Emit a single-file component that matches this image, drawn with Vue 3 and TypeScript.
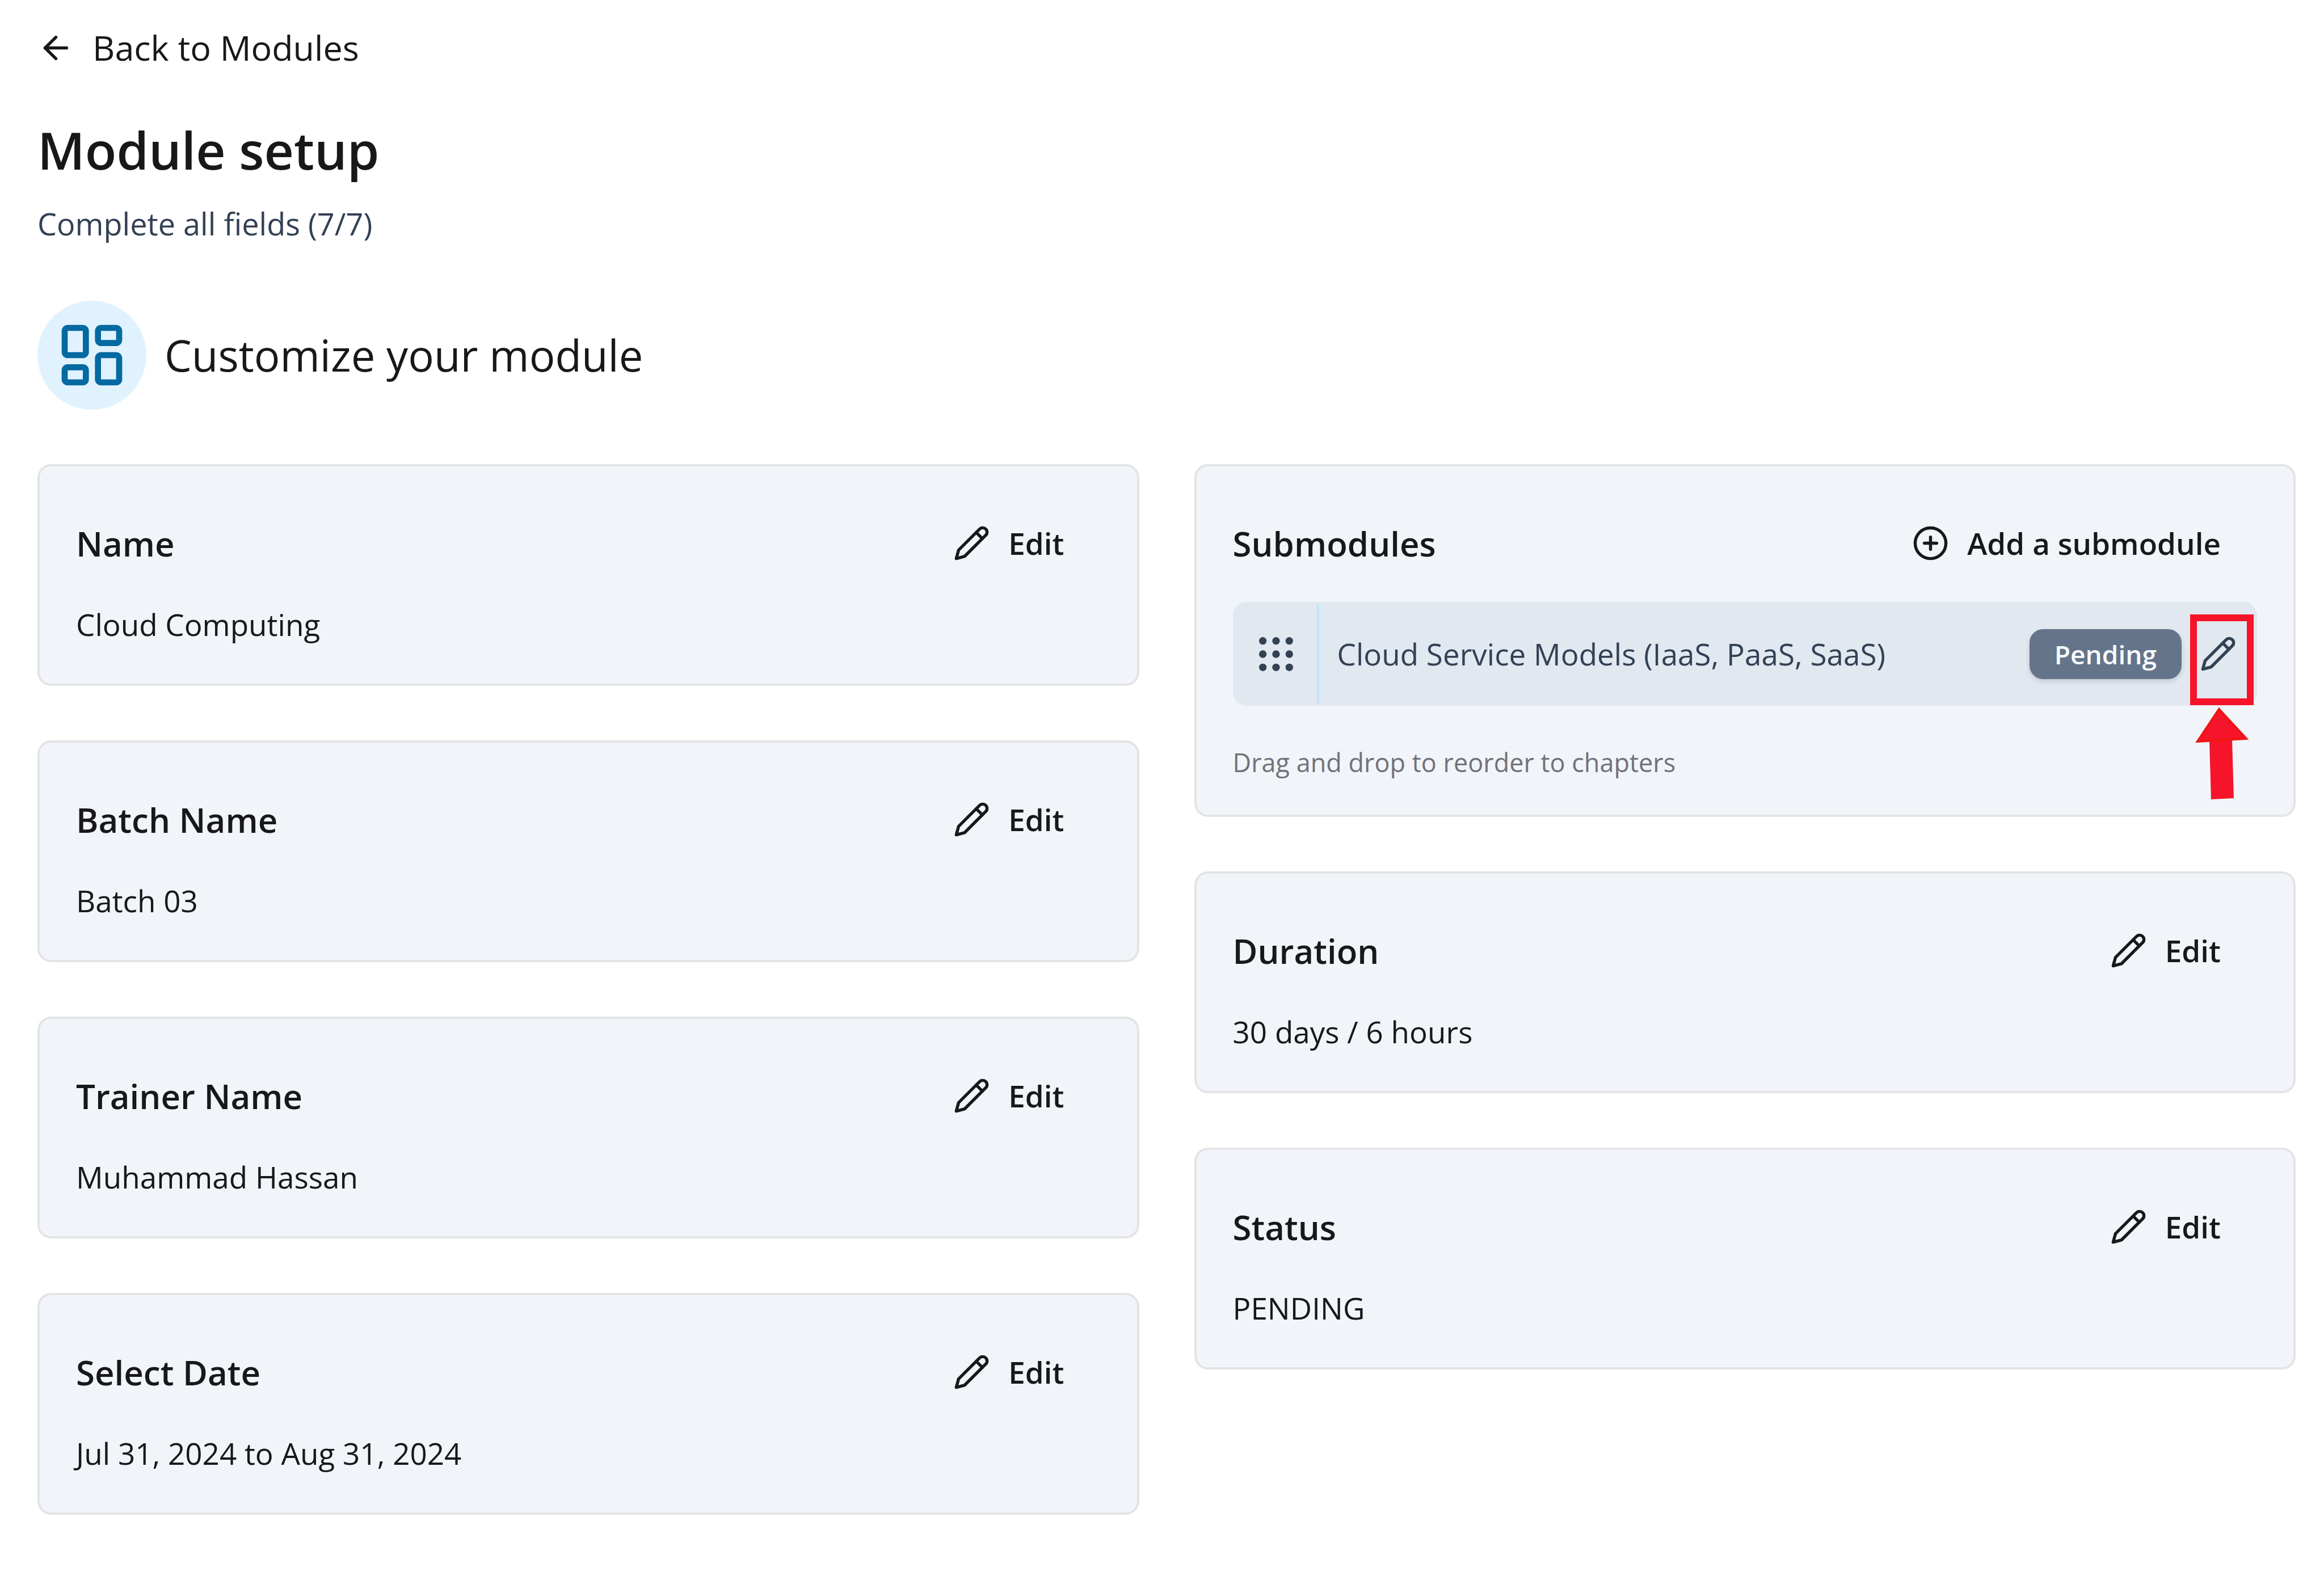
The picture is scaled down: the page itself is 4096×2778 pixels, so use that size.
<script setup lang="ts">
interface Field {
  label: string
  value: string
}

const leftFields: Field[] = [
  { label: 'Name', value: 'Cloud Computing' },
  { label: 'Batch Name', value: 'Batch 03' },
  { label: 'Trainer Name', value: 'Muhammad Hassan' },
  { label: 'Select Date', value: 'Jul 31, 2024 to Aug 31, 2024' },
]

const rightFields: Field[] = [
  { label: 'Duration', value: '30 days / 6 hours' },
  { label: 'Status', value: 'PENDING' },
]

const gripSteps: number[] = [5, 12, 19]
</script>

<template>
  <main class="page">
    <a class="back" href="#">
      <svg class="icon" viewBox="0 0 24 24"><path d="m12 19-7-7 7-7" /><path d="M19 12H5" /></svg>
      <span>Back to Modules</span>
    </a>

    <h1 class="title">Module setup</h1>
    <p class="progress">Complete all fields (7/7)</p>

    <div class="section">
      <span class="section-badge">
        <svg class="icon icon-section" viewBox="0 0 24 24">
          <rect width="7" height="9" x="3" y="3" rx="1" />
          <rect width="7" height="5" x="14" y="3" rx="1" />
          <rect width="7" height="9" x="14" y="12" rx="1" />
          <rect width="7" height="5" x="3" y="16" rx="1" />
        </svg>
      </span>
      <h2 class="section-title">Customize your module</h2>
    </div>

    <div class="columns">
      <div class="column">
        <section v-for="field in leftFields" :key="field.label" class="card">
          <div class="card-head">
            <h3 class="card-title">{{ field.label }}</h3>
            <button class="action" type="button">
              <svg class="icon" viewBox="0 0 24 24">
                <path d="M17 3a2.85 2.83 0 1 1 4 4L7.5 20.5 2 22l1.5-5.5Z" />
                <path d="m15 5 4 4" />
              </svg>
              <span>Edit</span>
            </button>
          </div>
          <p class="card-value">{{ field.value }}</p>
        </section>
      </div>

      <div class="column">
        <section class="card">
          <div class="card-head">
            <h3 class="card-title">Submodules</h3>
            <button class="action" type="button">
              <svg class="icon" viewBox="0 0 24 24">
                <circle cx="12" cy="12" r="10" />
                <path d="M8 12h8" />
                <path d="M12 8v8" />
              </svg>
              <span>Add a submodule</span>
            </button>
          </div>
          <div class="submodule">
            <span class="grip">
              <svg class="icon icon-grip" viewBox="0 0 24 24">
                <template v-for="y in gripSteps" :key="y">
                  <circle v-for="x in gripSteps" :key="x" :cx="x" :cy="y" r="1" />
                </template>
              </svg>
            </span>
            <span class="submodule-name">Cloud Service Models (IaaS, PaaS, SaaS)</span>
            <span class="status">Pending</span>
            <button class="submodule-edit" type="button" aria-label="Edit submodule">
              <svg class="icon" viewBox="0 0 24 24">
                <path d="M17 3a2.85 2.83 0 1 1 4 4L7.5 20.5 2 22l1.5-5.5Z" />
                <path d="m15 5 4 4" />
              </svg>
              <span class="callout">
                <svg class="callout-arrow" viewBox="0 0 96 168">
                  <path class="shaft" d="M26 62 66 60 69 163 29 165Z" />
                  <path class="head" d="M43 6 91 58 5 63Z" />
                </svg>
              </span>
            </button>
          </div>
          <p class="hint">Drag and drop to reorder to chapters</p>
        </section>

        <section v-for="field in rightFields" :key="field.label" class="card">
          <div class="card-head">
            <h3 class="card-title">{{ field.label }}</h3>
            <button class="action" type="button">
              <svg class="icon" viewBox="0 0 24 24">
                <path d="M17 3a2.85 2.83 0 1 1 4 4L7.5 20.5 2 22l1.5-5.5Z" />
                <path d="m15 5 4 4" />
              </svg>
              <span>Edit</span>
            </button>
          </div>
          <p class="card-value">{{ field.value }}</p>
        </section>
      </div>
    </div>
  </main>
</template>

<style>
body {
  margin: 0;
  background: #fff;
}
</style>

<style scoped>
.page {
  box-sizing: border-box;
  padding: 40px 50px 108px 66px;
  font-family: "Segoe UI", "Open Sans", "Noto Sans", sans-serif;
  color: #18181b;
}

h1,
h2,
h3,
p {
  margin: 0;
}

button {
  margin: 0;
  border: 0;
  background: none;
  font: inherit;
  color: inherit;
}

.icon {
  flex: none;
  width: 65px;
  height: 65px;
  fill: none;
  stroke: currentColor;
  stroke-width: 2;
  stroke-linecap: round;
  stroke-linejoin: round;
}

.back {
  display: flex;
  align-items: center;
  gap: 32px;
  width: fit-content;
  font-size: 61px;
  line-height: 88px;
  color: inherit;
  text-decoration: none;
}

.title {
  margin-top: 70px;
  font-size: 91px;
  line-height: 132px;
  font-weight: 600;
}

.progress {
  margin-top: 24px;
  font-size: 54px;
  line-height: 80px;
  color: #334155;
}

.section {
  display: flex;
  align-items: center;
  gap: 32px;
  margin-top: 96px;
}

.section-badge {
  display: flex;
  padding: 32px;
  border-radius: 50%;
  background: #e0f2fe;
  color: #0369a1;
}

.icon-section {
  width: 128px;
  height: 128px;
}

.section-title {
  font-size: 76px;
  line-height: 112px;
  font-weight: 400;
}

.columns {
  display: grid;
  grid-template-columns: 1fr 1fr;
  align-items: start;
  gap: 97px;
  margin-top: 96px;
}

.column {
  display: flex;
  flex-direction: column;
  gap: 96px;
}

.card {
  padding: 64px;
  border: 4px solid #e4e4e7;
  border-radius: 24px;
  background: #f1f5f9;
}

.card-head {
  display: flex;
  align-items: center;
  justify-content: space-between;
  height: 143px;
}

.card-title {
  font-size: 60px;
  line-height: 96px;
  font-weight: 600;
}

.action {
  display: flex;
  align-items: center;
  gap: 32px;
  padding: 32px 64px;
  font-size: 53px;
  line-height: 80px;
  font-weight: 600;
}

.card-value {
  margin-top: 32px;
  font-size: 53px;
  line-height: 80px;
}

.submodule {
  display: flex;
  align-items: stretch;
  height: 183px;
  margin-top: 32px;
  border-radius: 24px;
  background: #e2e8f0;
  color: #334155;
}

.grip {
  display: flex;
  align-items: center;
  margin: 4px 0;
  padding: 0 32px 0 36px;
  border-right: 4px solid #bae6fd;
}

.icon-grip {
  width: 80px;
  height: 80px;
}

.submodule-name {
  flex: 1;
  align-self: center;
  padding-left: 32px;
  font-size: 53px;
  line-height: 80px;
}

.status {
  align-self: center;
  padding: 12px 44px;
  border-radius: 24px;
  background: #64748b;
  box-shadow: 0 4px 8px rgba(0, 0, 0, 0.14);
  font-size: 46px;
  line-height: 64px;
  font-weight: 600;
  color: #f8fafc;
}

.submodule-edit {
  position: relative;
  display: flex;
  align-items: center;
  padding: 0 36px 0 32px;
}

/* Red frame that points the reader to the submodule's edit button */
.callout {
  position: absolute;
  top: 22px;
  right: 6px;
  box-sizing: border-box;
  width: 112px;
  height: 160px;
  border: 12px solid #f51429;
}

.callout-arrow {
  position: absolute;
  top: 149px;
  left: -4px;
  width: 96px;
  height: 168px;
}

.shaft {
  fill: #f51429;
}

.head {
  fill: #f51429;
  stroke: #f01414;
  stroke-width: 4;
}

.hint {
  margin-top: 72px;
  font-size: 45px;
  line-height: 56px;
  color: #71717a;
}
</style>
